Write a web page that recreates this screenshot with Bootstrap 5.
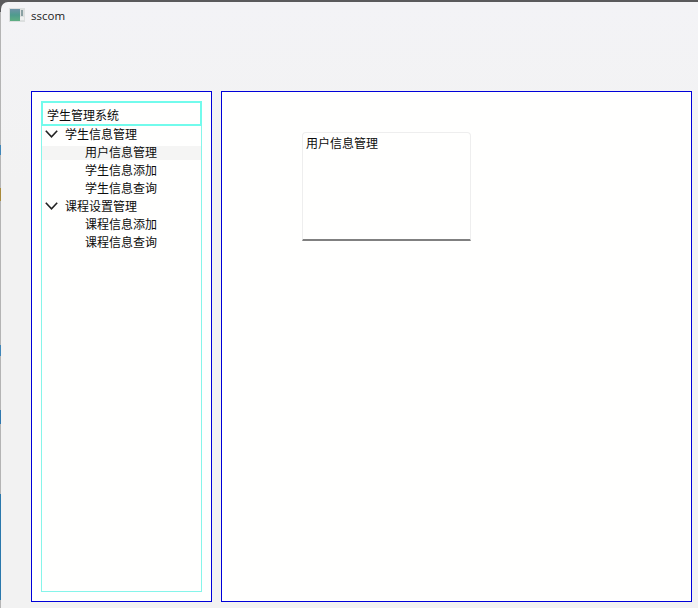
<!DOCTYPE html>
<html lang="zh"><head><meta charset="utf-8"><title>sscom</title>
<link href="https://cdn.jsdelivr.net/npm/bootstrap@5.3.0/dist/css/bootstrap.min.css" rel="stylesheet">
<style>
html,body{height:608px;overflow:hidden}
body{font-family:"Noto Sans CJK SC","Liberation Sans",sans-serif;font-size:12px;color:#0c0c0c;line-height:18px;background:linear-gradient(#5a5a5c 0 12px,#b4b4b4 12px 145px,#3f86b8 145px 155px,#b4b4b4 155px 188px,#a98a3a 188px 201px,#b4b4b4 201px 345px,#3f86b8 345px 356px,#b4b4b4 356px 410px,#2f78ae 410px 424px,#b4b4b4 424px 494px,#2a78ac 494px 600px,#b4b4b4 600px)}
.win{width:697px;height:606px;margin:2px 0 0 1px;border-top-left-radius:7px;background:linear-gradient(#f3f3f6,#f2f2f2 30%);padding-left:30px}
.ttl{height:89px;margin-left:-30px;padding:6px 0 0 8px;gap:6px;align-items:flex-start}
.ttl span{font-family:"Open Sans","Noto Sans",sans-serif;font-size:11.5px;line-height:16px;color:#222}
.panes{gap:9px}
.pane{background:#fffffe;border:1px solid #0000d8;height:511px}
.pane-l{width:181px;padding:9px}
.pane-r{width:471px;padding:40px 0 0 80px}
.tree{height:491px;border:1px solid #86f5ea}
.tree-h{height:25px;margin:-1px;border:2px solid #72fbec;padding:2px 4px;line-height:20px}
.node{height:18px;white-space:nowrap}
.node-g{padding-left:3px;gap:7px;align-items:center}
.node-c{padding-left:43px}
.node-s{background:linear-gradient(#f5f5f4,#f5f5f4) 0 3px/100% 14px no-repeat}
.box{width:169px;height:109px;border:1px solid #eee;border-bottom:2px solid #808080;border-radius:4px 4px 0 0;padding:1px 3px}
</style></head><body>
<div class="win">
<div class="ttl d-flex">
<svg width="16" height="14" viewBox="0 0 16 14"><defs><linearGradient id="ig" x1="0" y1="0" x2="0" y2="1"><stop offset="0" stop-color="#6f93a8"/><stop offset=".5" stop-color="#4f9b8e"/><stop offset="1" stop-color="#5fae82"/></linearGradient></defs><rect width="16" height="14" fill="#dcdfdf"/><rect x="1" y="1" width="10" height="12" fill="url(#ig)"/><rect x="12" y="2" width="2" height="6" fill="#8aa0a3"/><rect x="11" y="9" width="4" height="3" fill="#eef0f0"/></svg>
<span>sscom</span>
</div>
<div class="panes d-flex">
<div class="pane pane-l">
<div class="tree">
<div class="tree-h">学生管理系统</div>
<div class="node node-g d-flex"><svg width="13" height="8" viewBox="0 0 13 8"><path d="M.8.8 6.5 6.8 12.2.8" fill="none" stroke="#222" stroke-width="1.6"/></svg><span>学生信息管理</span></div>
<div class="node node-c node-s">用户信息管理</div>
<div class="node node-c">学生信息添加</div>
<div class="node node-c">学生信息查询</div>
<div class="node node-g d-flex"><svg width="13" height="8" viewBox="0 0 13 8"><path d="M.8.8 6.5 6.8 12.2.8" fill="none" stroke="#222" stroke-width="1.6"/></svg><span>课程设置管理</span></div>
<div class="node node-c">课程信息添加</div>
<div class="node node-c">课程信息查询</div>
</div>
</div>
<div class="pane pane-r">
<div class="box">用户信息管理</div>
</div>
</div>
</div>
</body></html>
